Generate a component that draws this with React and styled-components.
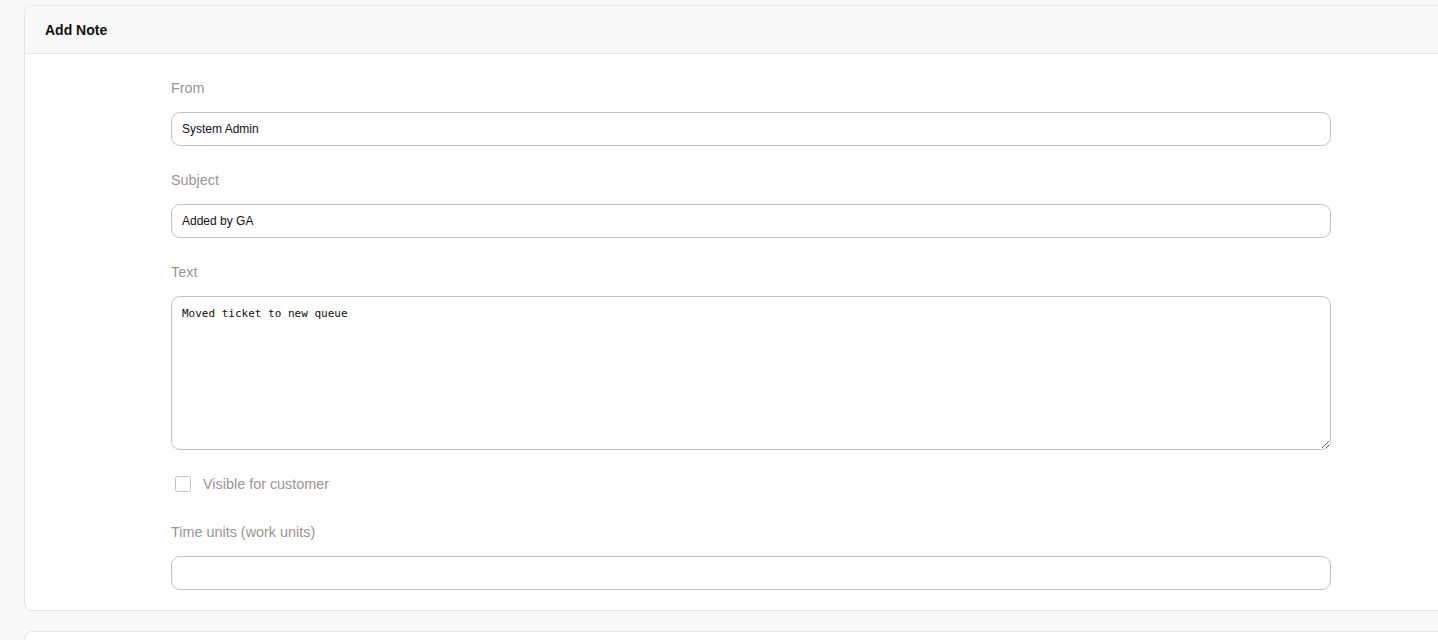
import React from "react";
import styled, { createGlobalStyle } from "styled-components";

const GlobalStyle = createGlobalStyle`
  html, body {
    margin: 0;
    padding: 0;
    background: #f8f8f8;
    overflow: hidden;
    font-family: "Liberation Sans", Arial, sans-serif;
  }
`;

const Page = styled.div`
  padding: 5px 0 0 24px;
  display: flex;
  flex-direction: column;
  gap: 20px;
`;

const Card = styled.section`
  width: 1440px;
  background: #fff;
  border: 1px solid #e6e5e3;
  border-radius: 8px;
  overflow: hidden;
  flex-shrink: 0;
  min-height: ${p => (p.stub ? "40px" : "auto")};
`;

const CardHeader = styled.header`
  height: 47px;
  display: flex;
  align-items: center;
  padding: 0 20px;
  background: #f8f8f8;
  border-bottom: 1px solid #e6e5e3;
  font-size: 14px;
  font-weight: bold;
  color: #111;
`;

const Form = styled.form`
  width: 1160px;
  padding: 26px 0 20px 146px;
  display: flex;
  flex-direction: column;
`;

const Field = styled.div`
  display: flex;
  flex-direction: column;
  margin-bottom: ${p => (p.gap === undefined ? 26 : p.gap)}px;
`;

const Label = styled.label`
  font-size: 14.4px;
  color: #999591;
  line-height: 16px;
  margin-bottom: 16px;
`;

const Input = styled.input`
  box-sizing: border-box;
  height: 34px;
  width: 100%;
  border: 1px solid #c6c3bf;
  border-radius: 9px;
  padding: 0 10px;
  font-family: "Liberation Sans", Arial, sans-serif;
  font-size: 12px;
  color: #111;
  background: #fff;
  outline: none;
`;

const TextArea = styled.textarea`
  box-sizing: border-box;
  height: 154px;
  width: 100%;
  border: 1px solid #c6c3bf;
  border-radius: 9px;
  padding: 10px 10px;
  font-family: "DejaVu Sans Mono", monospace;
  font-size: 11px;
  line-height: 14px;
  color: #111;
  background: #fff;
  outline: none;
  resize: vertical;
`;

const CheckRow = styled.label`
  display: flex;
  align-items: center;
  gap: 12px;
  height: 16px;
  padding-left: 4px;
  margin-bottom: 32px;
  font-size: 14.4px;
  color: #999591;
`;

const Box = styled.span`
  box-sizing: border-box;
  width: 16px;
  height: 16px;
  border: 1px solid #c6c3bf;
  border-radius: 3px;
  background: #fff;
`;

export default function App() {
  return (
    <>
      <GlobalStyle />
      <Page>
        <Card>
          <CardHeader>Add Note</CardHeader>
          <Form onSubmit={e => e.preventDefault()}>
            <Field>
              <Label>From</Label>
              <Input defaultValue="System Admin" />
            </Field>
            <Field>
              <Label>Subject</Label>
              <Input defaultValue="Added by GA" />
            </Field>
            <Field>
              <Label>Text</Label>
              <TextArea defaultValue="Moved ticket to new queue" />
            </Field>
            <CheckRow>
              <Box />
              Visible for customer
            </CheckRow>
            <Field gap={0}>
              <Label>Time units (work units)</Label>
              <Input defaultValue="" />
            </Field>
          </Form>
        </Card>
        <Card stub />
      </Page>
    </>
  );
}
